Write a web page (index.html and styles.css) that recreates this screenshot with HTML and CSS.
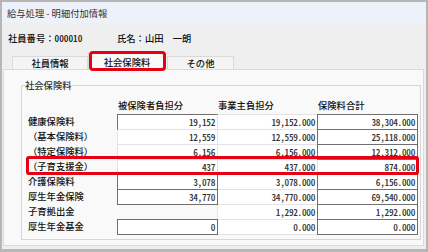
FILE: index.html
```html
<!DOCTYPE html>
<html lang="ja">
<head>
<meta charset="utf-8">
<title>給与処理 - 明細付加情報</title>
<link rel="stylesheet" href="styles.css">
</head>
<body>
<div class="window">
  <div class="titlebar">給与処理 - 明細付加情報</div>
  <div class="info">
    <span class="emp">社員番号：<span class="num">000010</span></span>
    <span class="name">氏名：山田　一朗</span>
  </div>
  <div class="tabs">
    <div class="tab">社員情報</div>
    <div class="tab active">社会保険料</div>
    <div class="tab">その他</div>
  </div>
  <div class="panel">
    <fieldset class="group">
      <legend>社会保険料</legend>
      <div class="row head"><span></span><span>被保険者負担分</span><span>事業主負担分</span><span>保険料合計</span></div>
      <div class="row"><span class="label">健康保険料</span><span class="box sunk">19,152</span><span class="box off">19,152.000</span><span class="box on">38,304.000</span></div>
      <div class="row"><span class="label">（基本保険料）</span><span class="box off">12,559</span><span class="box off">12,559.000</span><span class="box on">25,118.000</span></div>
      <div class="row"><span class="label">（特定保険料）</span><span class="box off">6,156</span><span class="box off">6,156.000</span><span class="box on">12,312.000</span></div>
      <div class="row mark"><span class="label">（子育支援金）</span><span class="box off">437</span><span class="box off">437.000</span><span class="box off">874.000</span></div>
      <div class="row"><span class="label">介護保険料</span><span class="box on">3,078</span><span class="box off">3,078.000</span><span class="box on">6,156.000</span></div>
      <div class="row"><span class="label">厚生年金保険</span><span class="box on">34,770</span><span class="box off">34,770.000</span><span class="box on">69,540.000</span></div>
      <div class="row"><span class="label">子育拠出金</span><span></span><span class="box off">1,292.000</span><span class="box on">1,292.000</span></div>
      <div class="row"><span class="label">厚生年金基金</span><span class="box on">0</span><span class="box off">0.000</span><span class="box on">0.000</span></div>
    </fieldset>
  </div>
</div>
</body>
</html>
```
FILE: styles.css
```css
html, body {
  margin: 0;
  padding: 0;
}
body {
  background: #b6b6b6;
  padding: 2px;
  width: 424px;
  height: 248px;
  font-family: "Noto Sans CJK JP", "Noto Sans", sans-serif;
  font-size: 9.3px;
  font-weight: 500;
  color: #111;
}
.window {
  width: 424px;
  height: 247px;
  background: #efefef;
  display: flex;
  flex-direction: column;
}
.titlebar {
  height: 21px;
  flex: none;
  display: flex;
  align-items: center;
  padding-left: 5px;
  background: #edf2fa;
  color: #333;
  font-weight: 400;
}
.info {
  height: 30px;
  flex: none;
  display: flex;
  align-items: center;
  padding-left: 6px;
}
.emp {
  width: 109px;
}
.num, .box {
  font-feature-settings: "hwid";
}
.tabs {
  height: 16px;
  flex: none;
  display: flex;
  align-items: flex-end;
  padding-left: 10px;
}
.tab {
  box-sizing: border-box;
  height: 13px;
  border: 1px solid #dadada;
  border-bottom: none;
  background: #f4f4f4;
  text-align: center;
  line-height: 12px;
  width: 76px;
}
.tab.active {
  position: relative;
  z-index: 2;
  width: 78px;
  height: 17px;
  margin-bottom: -1px;
  line-height: 16px;
  background: #f9f9f9;
}
.tab.active::after {
  content: "";
  position: absolute;
  top: -3px;
  left: 0;
  right: -1px;
  bottom: -1px;
  border: 3px solid #e60012;
  border-radius: 4px;
}
.tab:last-child {
  width: 67px;
  margin-left: 1px;
}
.panel {
  flex: 1;
  margin: 0 2px 3px 1px;
  border: 1px solid #dadada;
  background: #f9f9f9;
}
.group {
  box-sizing: border-box;
  width: 400px;
  margin: 9px 0 0 17px;
  padding: 8px 0 5px 0;
  border: 1px solid #d6d6d6;
  min-width: 0;
}
.group legend {
  margin-left: 3px;
  padding: 0;
  line-height: 12px;
  color: #333;
}
.row {
  display: grid;
  grid-template-columns: 89px 100px 100px 100px;
  height: 15px;
  margin-left: 6px;
  width: 389px;
}
.row.head {
  height: 12px;
  line-height: 12px;
  margin-bottom: 3px;
}
.row.head span {
  padding-left: 1px;
}
.label {
  line-height: 15px;
}
.box {
  box-sizing: border-box;
  width: 101px;
  height: 16px;
  border: 1px solid #e2e2e2;
  background: #fff;
  text-align: right;
  padding-right: 2px;
  line-height: 14px;
  color: #333;
  letter-spacing: -0.3px;
}
.box.on {
  position: relative;
  z-index: 1;
  border-color: #6f6f6f;
}
.box.sunk {
  position: relative;
  z-index: 1;
  border-color: #6f6f6f #e2e2e2 #e2e2e2 #6f6f6f;
}
.row.mark {
  position: relative;
}
.row.mark::after {
  content: "";
  position: absolute;
  z-index: 3;
  top: -3px;
  left: -2px;
  right: -2px;
  bottom: -1px;
  border: 3px solid #e60012;
  border-radius: 3px;
}
```
